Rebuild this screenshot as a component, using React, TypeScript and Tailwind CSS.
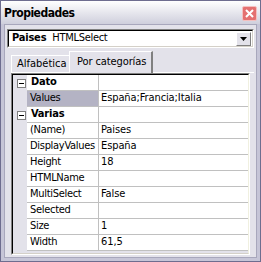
import React from "react";

function Box() {
  return (
    <div className="w-[9px] h-[9px] border border-[#808080] bg-white flex items-center justify-center">
      <div className="w-[5px] h-px bg-black" />
    </div>
  );
}

function CatRow({ label }: { label: string }) {
  return (
    <div className="flex h-[16px] items-stretch">
      <div className="w-[14px] shrink-0 flex items-center justify-center pl-[2px]">
        <Box />
      </div>
      <div className="w-[72px] shrink-0 bg-white border-b border-r border-[#c0c0c0] flex items-center pl-[4px] font-bold tracking-[-0.2px]">
        {label}
      </div>
      <div className="flex-1 bg-white border-b border-[#c0c0c0]" />
    </div>
  );
}

function PropRow({ name, value, selected }: { name: string; value: string; selected?: boolean }) {
  return (
    <div className="flex h-[16px] items-stretch">
      <div className="w-[14px] shrink-0" />
      <div
        className={
          "w-[72px] shrink-0 border-b border-r border-[#c0c0c0] flex items-center pl-[3px] tracking-[-0.3px] overflow-hidden whitespace-nowrap " +
          (selected ? "bg-[#b4b3c4]" : "bg-white")
        }
      >
        {name}
      </div>
      <div className="flex-1 bg-white border-b border-[#c0c0c0] flex items-center pl-[2px] whitespace-nowrap tracking-[-0.1px]">
        {value}
      </div>
    </div>
  );
}

export default function App() {
  return (
    <div className="w-[261px] h-[262px] bg-[#e3e2ea] border border-[#6e6d8f] flex flex-col text-[11px] text-black overflow-hidden font-['DejaVu_Sans_Condensed','DejaVu_Sans',sans-serif]">
      {/* title bar */}
      <div className="h-[23px] shrink-0 bg-gradient-to-b from-white to-[#cfcfdc] flex items-center justify-between pl-[3px] pr-[3px] pt-[1px]">
        <span className="font-bold text-[12px] tracking-[-0.5px]">Propiedades</span>
        <div className="w-[15px] h-[15px] rounded-[2px] border border-[#f4c0c0] bg-[#e47070] flex items-center justify-center">
          <svg width="9" height="9" viewBox="0 0 9 9">
            <path d="M1 1 L8 8 M8 1 L1 8" stroke="white" strokeWidth="2" />
          </svg>
        </div>
      </div>
      {/* body with inner frame */}
      <div className="flex-1 border-l-[3px] border-r-[3px] border-b-[3px] border-[#c6c5d7] flex flex-col">
        <div className="flex-1 border border-[#a8a7bc] bg-[#e3e2ea] flex flex-col px-[2px] pt-[4px]">
          {/* select */}
          <div className="h-[19px] bg-white border border-t-[#808080] border-l-[#808080] border-b-white border-r-white flex">
            <div className="flex-1 border border-t-black border-l-black border-b-[#d4d0c8] border-r-[#d4d0c8] flex items-center justify-between pl-[3px] pr-px">
              <span className="flex items-center whitespace-nowrap">
                <span className="font-bold tracking-[-0.2px]">Paises</span>
                <span className="ml-[6px] tracking-[-0.3px]">HTMLSelect</span>
              </span>
              <div className="w-[15px] h-[14px] bg-[#e3e2ea] border border-t-white border-l-white border-b-[#808080] border-r-[#808080] flex items-center justify-center">
                <svg width="7" height="4" viewBox="0 0 7 4">
                  <path d="M0 0 H7 L3.5 4 Z" fill="black" />
                </svg>
              </div>
            </div>
          </div>
          {/* tabs */}
          <div className="flex items-end h-[24px] pl-[4px] mt-[1px]">
            <div className="h-[18px] w-[58px] pl-[5px] flex items-center border-t border-l border-white border-b border-b-white whitespace-nowrap">
              Alfabética
            </div>
            <div className="h-[22px] w-[84px] pl-[7px] flex items-start pt-[2px] border-t border-l border-white border-r-2 border-r-[#808080] whitespace-nowrap tracking-[-0.1px]">
              Por categorías
            </div>
            <div className="flex-1 border-b border-white" />
          </div>
          {/* grid */}
          <div className="mx-[4px] border border-t-[#808080] border-l-[#808080] border-b-white border-r-white flex-1 mb-[2px]">
            <div className="h-full border border-t-black border-l-black border-b-[#d4d0c8] border-r-[#f0f0e0] bg-[#e3e2ea] flex flex-col">
              <CatRow label="Dato" />
              <PropRow name="Values" value="España;Francia;Italia" selected />
              <CatRow label="Varias" />
              <PropRow name="(Name)" value="Paises" />
              <PropRow name="DisplayValues" value="España" />
              <PropRow name="Height" value="18" />
              <PropRow name="HTMLName" value="" />
              <PropRow name="MultiSelect" value="False" />
              <PropRow name="Selected" value="" />
              <PropRow name="Size" value="1" />
              <PropRow name="Width" value="61,5" />
            </div>
          </div>
        </div>
      </div>
    </div>
  );
}
